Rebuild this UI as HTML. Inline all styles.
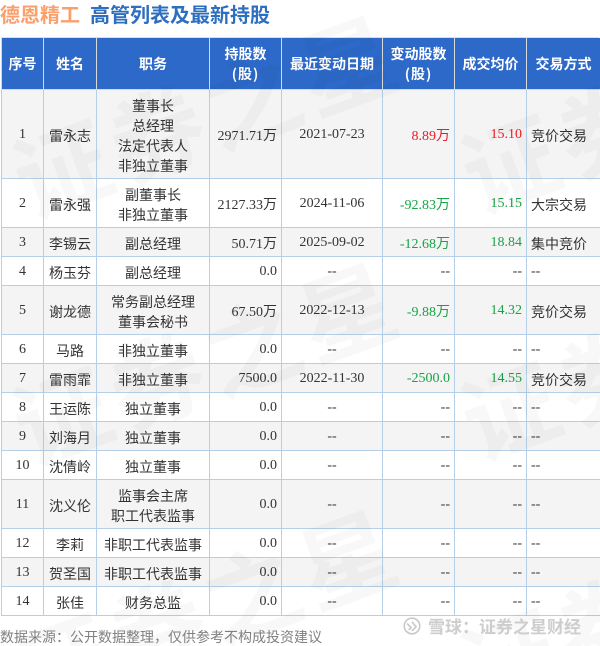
<!DOCTYPE html>
<html lang="zh">
<head>
<meta charset="utf-8">
<style>
html,body{margin:0;padding:0;background:#fff;overflow:hidden}
body{width:600px;height:646px;position:relative;font-family:"Liberation Serif","Noto Sans CJK SC",serif;color:#333}
.h{position:absolute;top:-2px;left:0;font:bold 20px/32px "Noto Sans CJK SC",sans-serif;white-space:nowrap}
.bar{position:absolute;left:1px;top:37px;width:598px;height:2px;background:#ddd}
table{position:absolute;left:1px;top:38px;border-collapse:collapse;table-layout:fixed;width:599px;font-size:14px}
thead tr{height:51px}
th{background:#2d69c9;color:#fff;font:bold 14px/20px "Noto Sans CJK SC",sans-serif;border:1px solid #d8d8d8;border-top:0;padding:2px 0 0;text-align:center}
th.p i{font-style:normal;letter-spacing:1px}
td{border:1px solid #b4d0e8;padding:2px 0 0;text-align:center;line-height:20px;font-size:14px;vertical-align:middle}
tr:nth-child(odd) td{background:#f4f4f4}
td.c{font-family:"Noto Sans CJK SC",sans-serif;font-size:14px;padding-top:4px}
td.r{text-align:right;padding-right:4px;padding-top:4px}
td.v{padding-top:2px}
td.l{text-align:left;padding-left:4px;padding-top:4px;font-family:"Noto Sans CJK SC",sans-serif;font-size:14px}
td.x{text-align:left;padding-left:4px}
.u{font-family:"Noto Sans CJK SC",sans-serif;font-size:14px}
.red{color:#f01a24}.grn{color:#18a346}
.wm{position:absolute;left:0;top:0;pointer-events:none}
.foot{position:absolute;left:0;top:628px;font:14px/18px "Noto Sans CJK SC",sans-serif;color:#808080;white-space:nowrap}
.xq{position:absolute;left:428px;top:614px;font:bold 17px/24px "Noto Sans CJK SC",sans-serif;color:#cdcdcd;white-space:nowrap}
</style>
</head>
<body>
<div class="h"><span style="color:#f9a06c">德恩精工</span><span style="color:#2d6fbe;margin-left:10px">高管列表及最新持股</span></div>
<div class="bar"></div>
<table>
<colgroup><col style="width:42px"><col style="width:53px"><col style="width:113px"><col style="width:72px"><col style="width:101px"><col style="width:72px"><col style="width:72px"><col style="width:74px"></colgroup>
<thead><tr><th>序号</th><th>姓名</th><th>职务</th><th class="p">持股数<br><i>(股)</i></th><th>最近变动日期</th><th class="p">变动股数<br><i>(股)</i></th><th>成交均价</th><th>交易方式</th></tr></thead>
<tbody>
<tr style="height:89px"><td>1</td><td class="c">雷永志</td><td class="c">董事长<br>总经理<br>法定代表人<br>非独立董事</td><td class="r">2971.71<span class="u">万</span></td><td>2021-07-23</td><td class="r red">8.89<span class="u">万</span></td><td class="r v red">15.10</td><td class="l">竞价交易</td></tr>
<tr style="height:49px"><td>2</td><td class="c">雷永强</td><td class="c">副董事长<br>非独立董事</td><td class="r">2127.33<span class="u">万</span></td><td>2024-11-06</td><td class="r grn">-92.83<span class="u">万</span></td><td class="r v grn">15.15</td><td class="l">大宗交易</td></tr>
<tr style="height:29px"><td>3</td><td class="c">李锡云</td><td class="c">副总经理</td><td class="r">50.71<span class="u">万</span></td><td>2025-09-02</td><td class="r grn">-12.68<span class="u">万</span></td><td class="r v grn">18.84</td><td class="l">集中竞价</td></tr>
<tr style="height:29px"><td>4</td><td class="c">杨玉芬</td><td class="c">副总经理</td><td class="r v">0.0</td><td>--</td><td class="r v">--</td><td class="r v">--</td><td class="x">--</td></tr>
<tr style="height:49px"><td>5</td><td class="c">谢龙德</td><td class="c">常务副总经理<br>董事会秘书</td><td class="r">67.50<span class="u">万</span></td><td>2022-12-13</td><td class="r grn">-9.88<span class="u">万</span></td><td class="r v grn">14.32</td><td class="l">竞价交易</td></tr>
<tr style="height:29px"><td>6</td><td class="c">马路</td><td class="c">非独立董事</td><td class="r v">0.0</td><td>--</td><td class="r v">--</td><td class="r v">--</td><td class="x">--</td></tr>
<tr style="height:29px"><td>7</td><td class="c">雷雨霏</td><td class="c">非独立董事</td><td class="r v">7500.0</td><td>2022-11-30</td><td class="r v grn">-2500.0</td><td class="r v grn">14.55</td><td class="l">竞价交易</td></tr>
<tr style="height:29px"><td>8</td><td class="c">王运陈</td><td class="c">独立董事</td><td class="r v">0.0</td><td>--</td><td class="r v">--</td><td class="r v">--</td><td class="x">--</td></tr>
<tr style="height:29px"><td>9</td><td class="c">刘海月</td><td class="c">独立董事</td><td class="r v">0.0</td><td>--</td><td class="r v">--</td><td class="r v">--</td><td class="x">--</td></tr>
<tr style="height:29px"><td>10</td><td class="c">沈倩岭</td><td class="c">独立董事</td><td class="r v">0.0</td><td>--</td><td class="r v">--</td><td class="r v">--</td><td class="x">--</td></tr>
<tr style="height:49px"><td>11</td><td class="c">沈义伦</td><td class="c">监事会主席<br>职工代表监事</td><td class="r v">0.0</td><td>--</td><td class="r v">--</td><td class="r v">--</td><td class="x">--</td></tr>
<tr style="height:29px"><td>12</td><td class="c">李莉</td><td class="c">非职工代表监事</td><td class="r v">0.0</td><td>--</td><td class="r v">--</td><td class="r v">--</td><td class="x">--</td></tr>
<tr style="height:29px"><td>13</td><td class="c">贺圣国</td><td class="c">非职工代表监事</td><td class="r v">0.0</td><td>--</td><td class="r v">--</td><td class="r v">--</td><td class="x">--</td></tr>
<tr style="height:29px"><td>14</td><td class="c">张佳</td><td class="c">财务总监</td><td class="r v">0.0</td><td>--</td><td class="r v">--</td><td class="r v">--</td><td class="x">--</td></tr>
</tbody>
</table>
<svg class="wm" width="600" height="646" viewBox="0 0 600 646" font-family="Noto Sans CJK SC,sans-serif" font-size="95" font-weight="bold" fill="#000" fill-opacity=".028">
<text transform="translate(30,219) rotate(-20)" letter-spacing="6">证券之星</text>
<text transform="translate(30,466) rotate(-20)" letter-spacing="6">证券之星</text>
<text transform="translate(30,713) rotate(-20)" letter-spacing="6">证券之星</text>
<text transform="translate(478,214) rotate(-20)" letter-spacing="6">证券之星</text>
<text transform="translate(478,461) rotate(-20)" letter-spacing="6">证券之星</text>
<text transform="translate(478,708) rotate(-20)" letter-spacing="6">证券之星</text>
</svg>
<div class="foot">数据来源：公开数据整理，仅供参考不构成投资建议</div>
<svg style="position:absolute;left:403px;top:617px" width="18" height="18" viewBox="0 0 22 22" fill="none" stroke="#c9c9c9" stroke-width="2"><circle cx="11" cy="11" r="9.5"/><path d="M5 8l5 5-3 3M11 6l5 6-5 5"/></svg>
<div class="xq">雪球：证券之星财经</div>
</body>
</html>
